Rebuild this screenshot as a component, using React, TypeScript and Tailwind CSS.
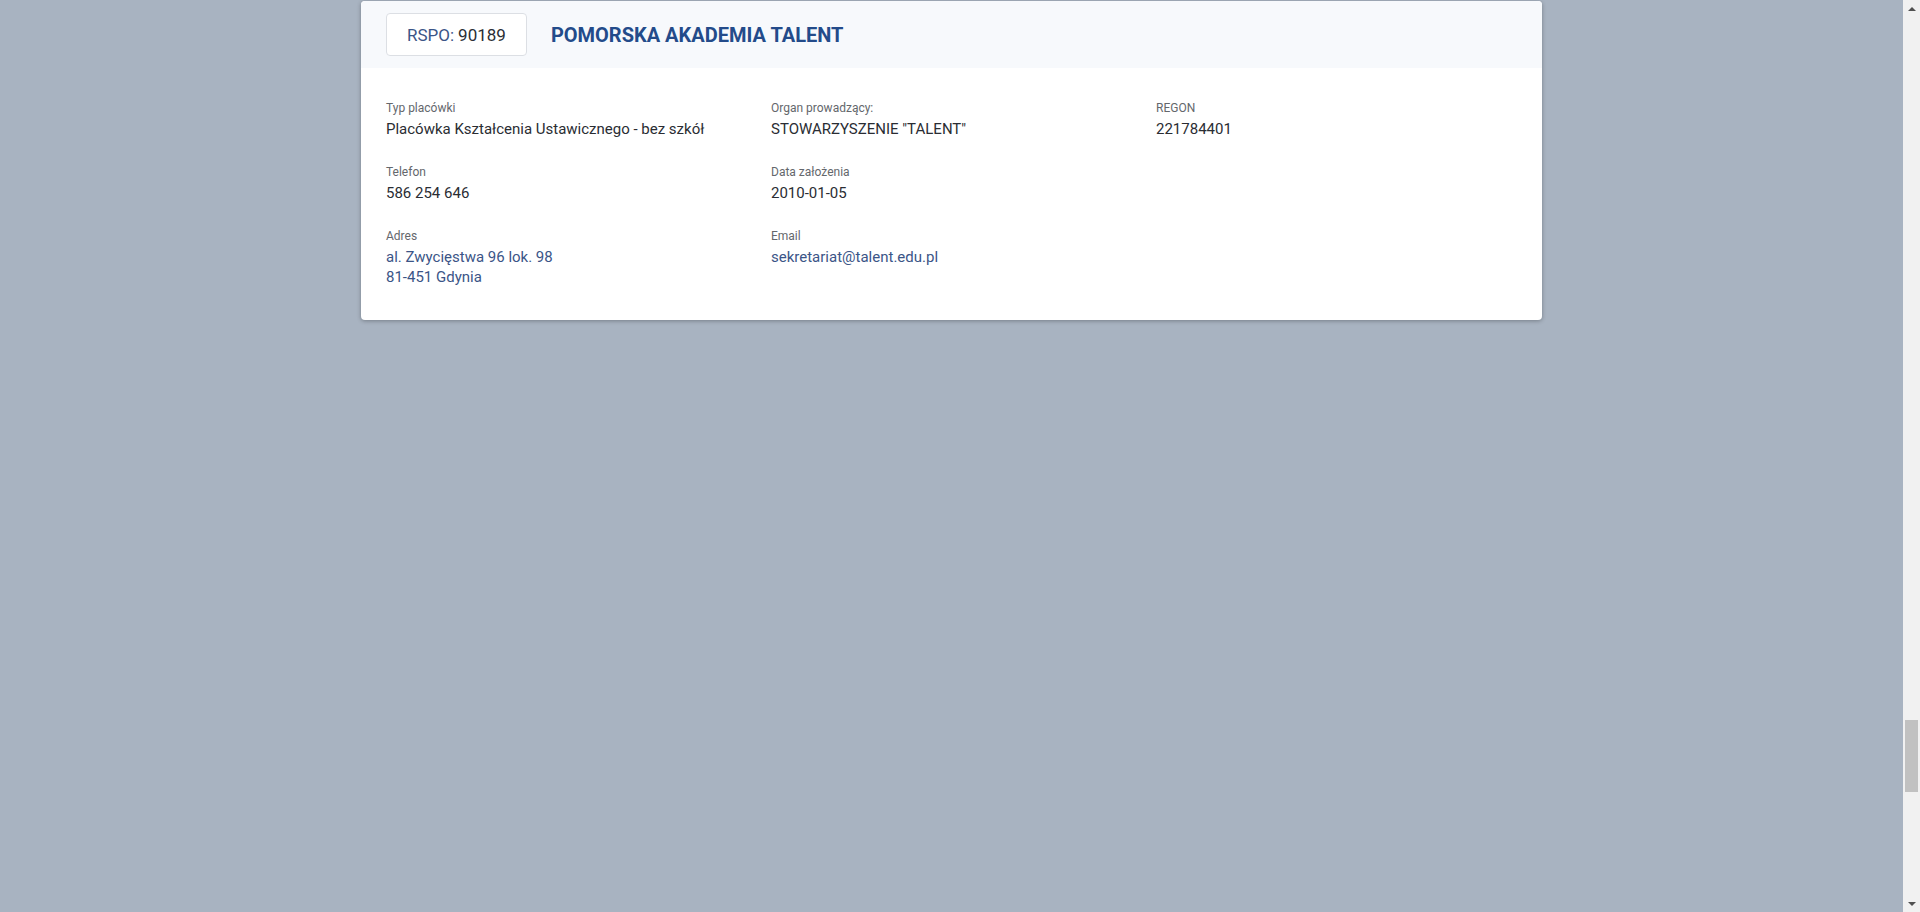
interface Field {
  label: string;
  lines: string[];
  link?: boolean;
}

const fields: Field[] = [
  { label: "Typ placówki", lines: ["Placówka Kształcenia Ustawicznego - bez szkół"] },
  { label: "Organ prowadzący:", lines: ['STOWARZYSZENIE "TALENT"'] },
  { label: "REGON", lines: ["221784401"] },
  { label: "Telefon", lines: ["586 254 646"] },
  { label: "Data założenia", lines: ["2010-01-05"] },
  { label: "", lines: [] },
  { label: "Adres", lines: ["al. Zwycięstwa 96 lok. 98", "81-451 Gdynia"], link: true },
  { label: "Email", lines: ["sekretariat@talent.edu.pl"], link: true },
];

function SchoolCard() {
  return (
    <div className="mx-auto mt-px w-[1181px] overflow-hidden rounded-[4px] bg-white shadow-[0_1px_4px_rgba(0,0,0,0.3)]">

      {/* Header */}

      <div className="flex h-[67px] items-center gap-[24px] bg-[#f7f9fc] px-[25px]">
        <div className="flex h-[43px] items-center rounded-[4px] border border-[#dcdfe4] bg-white px-5 text-[17px] leading-5">
          <span className="text-[#3b5587]">RSPO:</span>
          <span className="ml-1 text-[#2b2f36]">90189</span>
        </div>
        <h2 className="text-[20px] font-bold leading-6 text-[#234b8a]">
          POMORSKA AKADEMIA TALENT
        </h2>
      </div>

      {/* Details */}

      <div className="grid grid-cols-3 gap-x-6 gap-y-[25px] px-[25px] pb-[33px] pt-8">
        {fields.map((f, i) => (
          <div key={i} className="flex flex-col">
            {f.label && (
              <span className="mb-[3px] text-[12px] leading-4 text-[#64676c]">{f.label}</span>
            )}
            {f.lines.map((line) => (
              <span
                key={line}
                className={`text-[15px] leading-5 ${
                  f.link ? "text-[#3b5587]" : "text-[#2a2d33]"
                }`}
              >
                {line}
              </span>
            ))}
          </div>
        ))}
      </div>

    </div>
  );
}

function Scrollbar() {
  return (
    <div className="flex h-screen w-[17px] shrink-0 flex-col items-center bg-[#f1f1f1]">
      <div className="flex h-[17px] items-center justify-center">
        <div className="h-0 w-0 border-x-[4px] border-b-[4px] border-x-transparent border-b-[#505050]" />
      </div>
      <div className="mt-[703px] h-[72px] w-[13px] bg-[#c1c1c1]" />
      <div className="flex-1" />
      <div className="flex h-[17px] items-center justify-center">
        <div className="h-0 w-0 border-x-[4px] border-t-[4px] border-x-transparent border-t-[#505050]" />
      </div>
    </div>
  );
}

export default function App() {
  return (
    <div
      className="flex h-screen overflow-hidden bg-[#a8b3c1]"
      style={{ fontFamily: "Roboto, 'Noto Sans', sans-serif" }}
    >
      <main className="flex-1">
        <SchoolCard />
      </main>
      <Scrollbar />
    </div>
  );
}
